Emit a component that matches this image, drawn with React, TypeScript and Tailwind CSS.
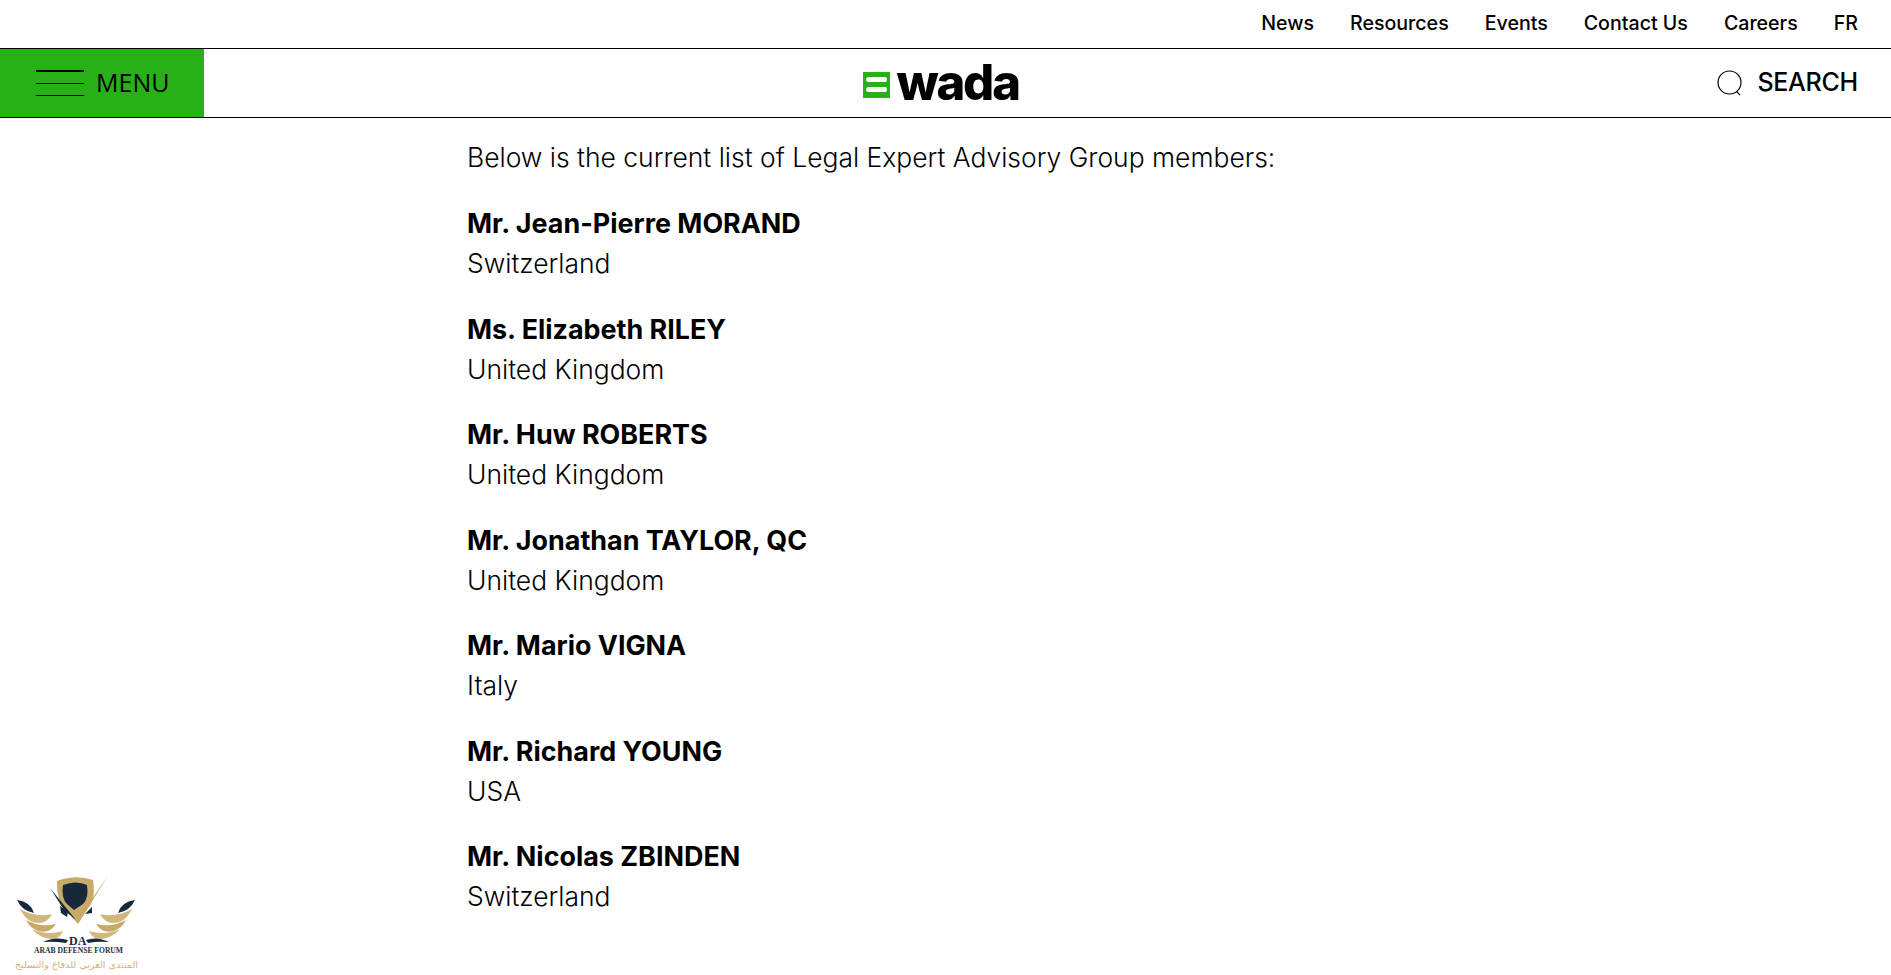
const topLinks = ["News", "Resources", "Events", "Contact Us", "Careers", "FR"];

const members = [
  { name: "Mr. Jean-Pierre MORAND", country: "Switzerland" },
  { name: "Ms. Elizabeth RILEY", country: "United Kingdom" },
  { name: "Mr. Huw ROBERTS", country: "United Kingdom" },
  { name: "Mr. Jonathan TAYLOR, QC", country: "United Kingdom" },
  { name: "Mr. Mario VIGNA", country: "Italy" },
  { name: "Mr. Richard YOUNG", country: "USA" },
  { name: "Mr. Nicolas ZBINDEN", country: "Switzerland" },
];

const ForumBadge = () => (
  <div className="absolute bottom-0 left-0 w-[160px] h-[115px]">
    <svg viewBox="0 0 160 115" className="absolute inset-0 w-[160px] h-[115px]">
      {/* shield */}
      <path d="M57 21 Q76 14 93 20 Q96 40 88 48 L78 64 L66 50 Q56 40 57 21Z" fill="#c9a96a" />
      <path d="M63 25 Q76 20 87 25 Q89 38 83 44 L74 50 L67 44 Q61 38 63 25Z" fill="#16283a" />
      {/* check mark */}
      <path d="M77 65 L108 16 L84 50Z" fill="#c9a96a" />
      <path d="M50 28 L76 60 L64 50Z" fill="#16283a" />
      <path d="M60 46 L68 52 L67 57 L61 53Z" fill="#16283a" />
      <path d="M92 47 L85 54 L92 53Z" fill="#16283a" />
      {/* left wing */}
      <path d="M17 40 Q31 42 34 53 Q22 51 17 40Z" fill="#16283a" />
      <path d="M20 49 Q36 58 52 54 Q46 66 32 62 Q24 58 20 49Z" fill="#d1b67e" />
      <path d="M26 60 Q40 68 56 64 Q50 74 38 71 Q30 68 26 60Z" fill="#c9a96a" />
      <path d="M32 69 Q46 76 63 71 Q58 82 46 78 Q38 76 32 69Z" fill="#d1b67e" />
      <path d="M43 82 Q55 76 68 80 L66 83 Q54 81 43 82Z" fill="#16283a" />
      {/* right wing */}
      <path d="M135 40 Q121 42 118 53 Q130 51 135 40Z" fill="#16283a" />
      <path d="M132 49 Q116 58 100 54 Q106 66 120 62 Q128 58 132 49Z" fill="#d1b67e" />
      <path d="M126 60 Q112 68 96 64 Q102 74 114 71 Q122 68 126 60Z" fill="#c9a96a" />
      <path d="M120 69 Q106 76 89 71 Q94 82 106 78 Q114 76 120 69Z" fill="#d1b67e" />
      <path d="M109 82 Q97 76 86 80 L88 83 Q98 81 109 82Z" fill="#16283a" />
    </svg>
    <span className="absolute top-[75px] left-[69px] font-['Liberation_Serif',serif] font-bold text-[12px] leading-[12px] text-[#16283a]">
      DA
    </span>
    <span className="absolute top-[86px] left-[34px] whitespace-nowrap font-['Liberation_Serif',serif] font-bold text-[7.6px] leading-[10px] text-[#1f2f40]">
      ARAB DEFENSE FORUM
    </span>
    <span
      dir="rtl"
      className="absolute top-[98px] left-[14px] w-[124px] whitespace-nowrap font-['DejaVu_Sans',sans-serif] text-[9.6px] leading-[14px] text-[#d4b27c]"
    >
      المنتدى العربي للدفاع والتسليح
    </span>
  </div>
);

export default function App() {
  return (
    <div className="relative h-[975px] overflow-hidden bg-white text-black font-['Inter',sans-serif]">
      {/* Top links */}
      <div className="h-[48px] flex items-center justify-end gap-[36px] pr-[33px] text-[19.6px] font-medium">
        {topLinks.map((link) => (
          <a key={link} className="mt-[-1px]">
            {link}
          </a>
        ))}
      </div>

      {/* Main header */}
      <header className="h-[70px] flex items-stretch justify-between border-y border-black">
        <button className="w-[204px] bg-[#28b018] flex items-center pl-[36px] gap-[12px]">
          <span className="flex flex-col w-[48px]">
            <span className="h-[2px] bg-black" />
            <span className="h-px bg-black mt-[11px]" />
            <span className="h-px bg-black mt-[11px]" />
          </span>
          <span className="font-['Open_Sans',sans-serif] font-medium text-[25px] leading-none mb-[2px]">MENU</span>
        </button>

        <div className="flex items-center gap-[7px] ml-[-39px]">
          <svg width="27" height="26" viewBox="0 0 27 26" className="mt-[4px]">
            <path
              fillRule="evenodd"
              d="M0 0H27V26H0Z M6 5Q3 5 3 7.5Q3 10 6 10H23Q25 7.5 23 5Z M6 15Q3 15 3 17.5Q3 20 6 20H23Q25 17.5 23 15Z"
              fill="#28b018"
            />
          </svg>
          <span className="text-[49px] leading-none font-extrabold tracking-[-0.045em] mt-[-1px]">wada</span>
        </div>

        <div className="flex items-center gap-[13px] pr-[33px]">
          <svg width="28" height="28" viewBox="0 0 28 28" fill="none" stroke="black" strokeWidth="1.2">
            <circle cx="13.5" cy="13.5" r="11.5" />
            <path d="M20.5 22.5L24 26" />
          </svg>
          <span className="text-[25px] font-medium tracking-[-0.01em]">SEARCH</span>
        </div>
      </header>

      {/* Member list */}
      <main className="pl-[467px] pt-[19px]">
        <p className="text-[26.45px] leading-[40px] font-light">
          Below is the current list of Legal Expert Advisory Group members:
        </p>
        <div className="flex flex-col gap-[26.5px] mt-[27px]">
          {members.map((member) => (
            <div key={member.name} className="text-[26.45px]">
              <div className="text-[26.9px] leading-[39px] font-bold">{member.name}</div>
              <div className="leading-[40px] font-light">{member.country}</div>
            </div>
          ))}
        </div>
      </main>

      <ForumBadge />
    </div>
  );
}
